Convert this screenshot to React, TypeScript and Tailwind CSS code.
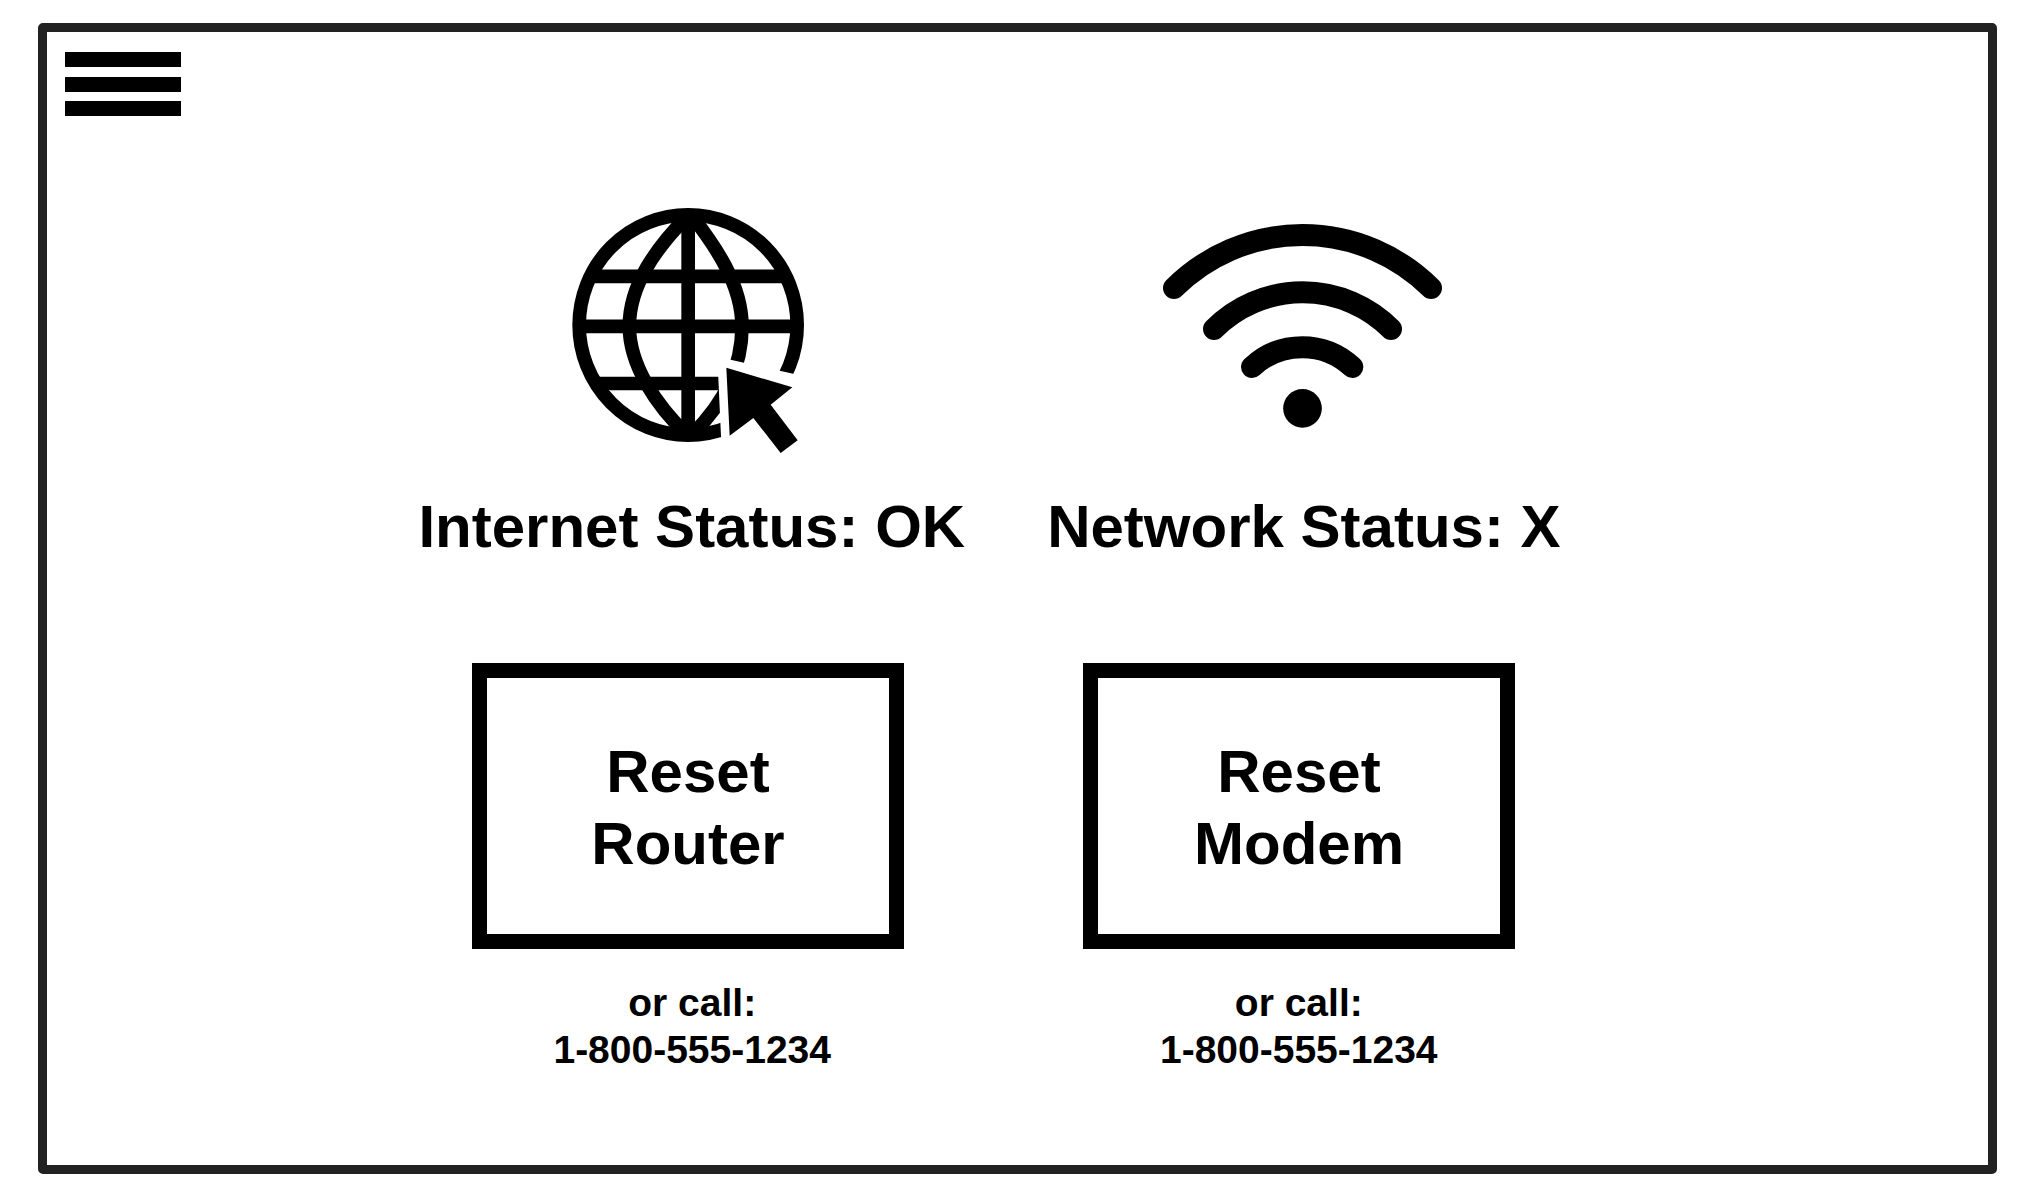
import React from "react";

function GlobeIcon() {
  return (
    <svg viewBox="9 30 780 750" className="h-[250px] w-[260px]" fill="none" stroke="#000" strokeWidth="41" aria-hidden="true">
      <ellipse cx="387.5" cy="390" rx="327" ry="330.5" />
      <path d="M387.5 60V720M95 244H680M60 394H715M112 565.5H600" />
      <path d="M387 62C290 160 211 270 211 394C211 510 290 630 387 722" />
      <path d="M398 62C468 152 549 268 549 394C549 510 500 620 400 718" />
      <path d="M475 485L800 558V810H490Z" fill="#fff" stroke="none" />
      <path d="M502 518L700 577L635 629L716 736L665 774L583 669L512 722Z" fill="#000" stroke="none" />
    </svg>
  );
}

function WifiIcon() {
  return (
    <svg viewBox="15 -15 900 750" className="h-[250px] w-[300px]" fill="none" stroke="#000" strokeWidth="66" strokeLinecap="round" aria-hidden="true">
      <path d="M75 234A547 547 0 0 1 846 234" />
      <path d="M195 357A375 375 0 0 1 726 357" />
      <path d="M309 471A220 220 0 0 1 610 471" />
      <circle cx="460.5" cy="595" r="58" fill="#000" stroke="none" />
    </svg>
  );
}

function Status({ icon, label }: { icon: React.ReactNode; label: string }) {
  return (
    <div className="flex flex-col items-center gap-9">
      {icon}
      <h2 className="text-[60px] leading-[72px] font-bold">{label}</h2>
    </div>
  );
}

function ResetButton({ device }: { device: string }) {
  return (
    <button
      type="button"
      className="flex h-[286px] w-[432px] cursor-pointer flex-col items-center justify-center border-[15px] border-black bg-white pt-1 text-[60px] leading-[72px] font-bold"
    >
      <span>Reset</span>
      <span>{device}</span>
    </button>
  );
}

function CallInfo() {
  return (
    <p className="text-center text-[39px] leading-[47px] font-bold">
      or call:
      <br />
      <a href="tel:1-800-555-1234" className="whitespace-nowrap">1-800-555-1234</a>
    </p>
  );
}

export default function App() {
  return (
    <div className="flex min-h-screen flex-col bg-white pt-[23px] pr-[43px] pb-6 pl-[38px] font-['Liberation_Sans',Arial,sans-serif] text-black">
      <div className="flex grow flex-col rounded-[5px] border-[9px] border-[#222222]">
        <header className="flex pt-5 pl-[18px]">
          <button type="button" aria-label="Menu" className="flex h-16 w-[116px] cursor-pointer flex-col justify-between">
            <span className="h-[15px] w-full bg-black" />
            <span className="h-[15px] w-full bg-black" />
            <span className="h-[15px] w-full bg-black" />
          </button>
        </header>
        <main className="flex flex-col pt-[89px]">
          <section aria-label="Status" className="flex flex-wrap justify-center gap-x-[82px] gap-y-10 pr-14">
            <Status icon={<GlobeIcon />} label="Internet Status: OK" />
            <Status icon={<WifiIcon />} label="Network Status: X" />
          </section>
          <section aria-label="Reset" className="mt-[100px] flex flex-wrap justify-center gap-x-[179px] gap-y-10 pr-12">
            <ResetButton device="Router" />
            <ResetButton device="Modem" />
          </section>
          <section aria-label="Support" className="mt-[30px] flex flex-wrap justify-center gap-x-[329px] gap-y-6 pr-11">
            <CallInfo />
            <CallInfo />
          </section>
        </main>
      </div>
    </div>
  );
}
